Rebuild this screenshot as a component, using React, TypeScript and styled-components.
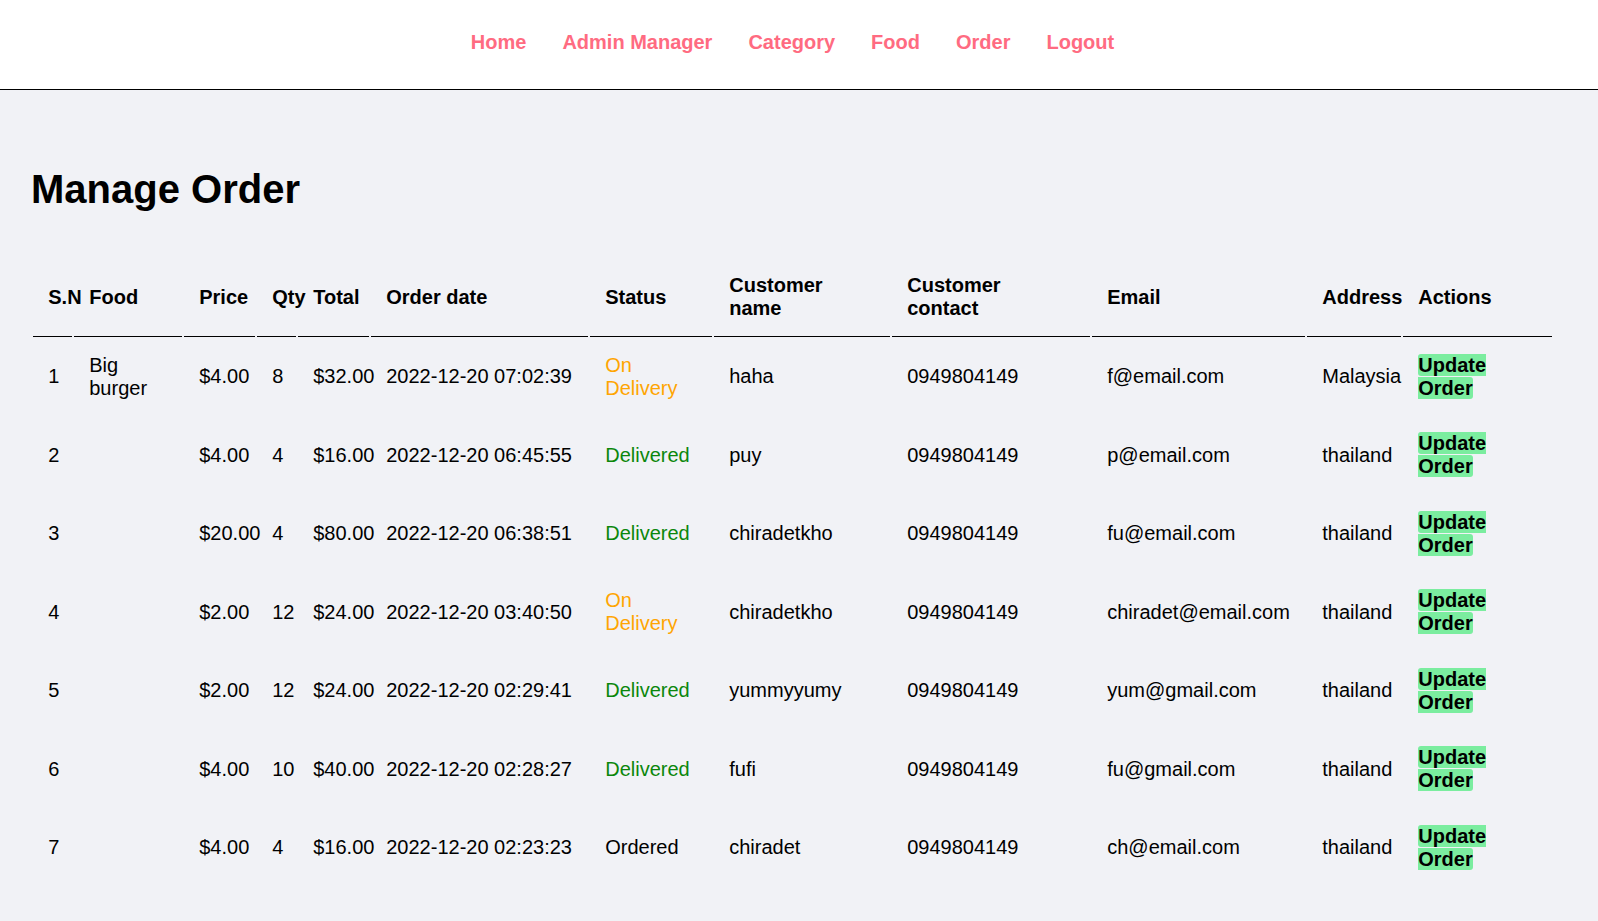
import React from "react";
import styled, { createGlobalStyle } from "styled-components";

const GlobalStyle = createGlobalStyle`
  html, body {
    margin: 0;
    padding: 0;
    background: #f1f2f6;
    color: #000;
    font-family: "Liberation Sans", Arial, sans-serif;
    font-size: 20px;
  }
`;

const NavBar = styled.nav`
  background: #ffffff;
  border-bottom: 1px solid #000;
  display: flex;
  justify-content: center;
  gap: 36px;
  padding: 31px 13px 35px 0;
  line-height: 23px;
`;

const NavLink = styled.a`
  color: #ff6b81;
  font-weight: bold;
  font-size: 20px;
  text-decoration: none;
  cursor: pointer;
`;

const Main = styled.main`
  padding: 0 31px 40px 31px;
`;

const Title = styled.h1`
  font-size: 40px;
  font-weight: bold;
  line-height: 46px;
  margin: 76px 0 45px 0;
`;

const Table = styled.table`
  width: 1523px;
  table-layout: fixed;
  border-collapse: separate;
  border-spacing: 2px;
  font-size: 20px;
`;

const Col = styled.col<{ $w: number }>`
  width: ${(p) => p.$w}px;
`;

const HeadCell = styled.th`
  text-align: left;
  font-weight: bold;
  padding: 15.25px;
  border-bottom: 1px solid #000;
  vertical-align: middle;
`;

const Cell = styled.td`
  padding: 15.25px;
  vertical-align: middle;
`;

const Status = styled.span<{ $tone: "orange" | "green" | "plain" }>`
  color: ${(p) =>
    p.$tone === "orange" ? "#ffa502" : p.$tone === "green" ? "#0b870b" : "#000"};
`;

const UpdateLink = styled.a`
  background: #7bed9f;
  color: #000;
  font-weight: bold;
  text-decoration: none;
  border-radius: 3px;
  cursor: pointer;
`;

const columns = [
  { label: "S.N", w: 39 },
  { label: "Food", w: 108 },
  { label: "Price", w: 71 },
  { label: "Qty", w: 39 },
  { label: "Total", w: 71 },
  { label: "Order date", w: 217 },
  { label: "Status", w: 122 },
  { label: "Customer name", w: 176 },
  { label: "Customer contact", w: 198 },
  { label: "Email", w: 213 },
  { label: "Address", w: 94 },
  { label: "Actions", w: 149 },
];

type Order = {
  food: string;
  price: string;
  qty: string;
  total: string;
  date: string;
  status: string;
  name: string;
  contact: string;
  email: string;
  address: string;
};

const orders: Order[] = [
  { food: "Big burger", price: "$4.00", qty: "8", total: "$32.00", date: "2022-12-20 07:02:39", status: "On Delivery", name: "haha", contact: "0949804149", email: "f@email.com", address: "Malaysia" },
  { food: "", price: "$4.00", qty: "4", total: "$16.00", date: "2022-12-20 06:45:55", status: "Delivered", name: "puy", contact: "0949804149", email: "p@email.com", address: "thailand" },
  { food: "", price: "$20.00", qty: "4", total: "$80.00", date: "2022-12-20 06:38:51", status: "Delivered", name: "chiradetkho", contact: "0949804149", email: "fu@email.com", address: "thailand" },
  { food: "", price: "$2.00", qty: "12", total: "$24.00", date: "2022-12-20 03:40:50", status: "On Delivery", name: "chiradetkho", contact: "0949804149", email: "chiradet@email.com", address: "thailand" },
  { food: "", price: "$2.00", qty: "12", total: "$24.00", date: "2022-12-20 02:29:41", status: "Delivered", name: "yummyyumy", contact: "0949804149", email: "yum@gmail.com", address: "thailand" },
  { food: "", price: "$4.00", qty: "10", total: "$40.00", date: "2022-12-20 02:28:27", status: "Delivered", name: "fufi", contact: "0949804149", email: "fu@gmail.com", address: "thailand" },
  { food: "", price: "$4.00", qty: "4", total: "$16.00", date: "2022-12-20 02:23:23", status: "Ordered", name: "chiradet", contact: "0949804149", email: "ch@email.com", address: "thailand" },
];

const toneOf = (s: string): "orange" | "green" | "plain" =>
  s === "On Delivery" ? "orange" : s === "Delivered" ? "green" : "plain";

const navItems = ["Home", "Admin Manager", "Category", "Food", "Order", "Logout"];

export default function App() {
  return (
    <>
      <GlobalStyle />
      <NavBar>
        {navItems.map((n) => (
          <NavLink key={n}>{n}</NavLink>
        ))}
      </NavBar>
      <Main>
        <Title>Manage Order</Title>
        <Table>
          <colgroup>
            {columns.map((c) => (
              <Col key={c.label} $w={c.w} />
            ))}
          </colgroup>
          <thead>
            <tr>
              {columns.map((c) => (
                <HeadCell key={c.label}>{c.label}</HeadCell>
              ))}
            </tr>
          </thead>
          <tbody>
            {orders.map((o, i) => (
              <tr key={i}>
                <Cell>{i + 1}</Cell>
                <Cell>{o.food}</Cell>
                <Cell>{o.price}</Cell>
                <Cell>{o.qty}</Cell>
                <Cell>{o.total}</Cell>
                <Cell>{o.date}</Cell>
                <Cell>
                  <Status $tone={toneOf(o.status)}>{o.status}</Status>
                </Cell>
                <Cell>{o.name}</Cell>
                <Cell>{o.contact}</Cell>
                <Cell>{o.email}</Cell>
                <Cell>{o.address}</Cell>
                <Cell>
                  <UpdateLink>Update Order</UpdateLink>
                </Cell>
              </tr>
            ))}
          </tbody>
        </Table>
      </Main>
    </>
  );
}
